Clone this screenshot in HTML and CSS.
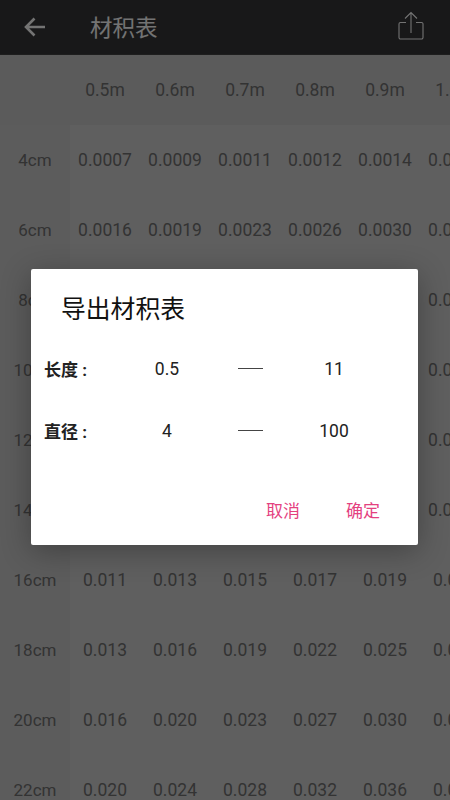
FILE: index.html
```html
<!DOCTYPE html>
<html lang="zh">
<head>
<meta charset="utf-8">
<title>材积表</title>
<link rel="stylesheet" href="styles.css">
</head>
<body>
<div class="app">
  <header class="topbar">
    <svg class="back" viewBox="0 0 22 20" width="22" height="20"><path d="M21 10H2M10.500 1.500L2 10l8.500 8.500" fill="none" stroke="#fff" stroke-width="2.600"/></svg>
    <h1 class="title">材积表</h1>
    <svg class="share" viewBox="0 0 26 30" width="26" height="30"><path d="M8 11.500H2.500a1.500 1.500 0 0 0-1.500 1.500v13.500a1.500 1.500 0 0 0 1.500 1.500h21a1.500 1.500 0 0 0 1.500-1.500V13a1.500 1.500 0 0 0-1.500-1.500H18M13 22V1.500M7 7.500L13 1.500 19 7.500" fill="none" stroke="#fff" stroke-width="1.100"/></svg>
  </header>
  <main class="table">
    <div class="row head"><span class="cell first"></span><span class="cell">0.5m</span><span class="cell">0.6m</span><span class="cell">0.7m</span><span class="cell">0.8m</span><span class="cell">0.9m</span><span class="cell">1.0m</span></div>
    <div class="row"><span class="cell first">4cm</span><span class="cell">0.0007</span><span class="cell">0.0009</span><span class="cell">0.0011</span><span class="cell">0.0012</span><span class="cell">0.0014</span><span class="cell">0.0016</span></div>
    <div class="row"><span class="cell first">6cm</span><span class="cell">0.0016</span><span class="cell">0.0019</span><span class="cell">0.0023</span><span class="cell">0.0026</span><span class="cell">0.0030</span><span class="cell">0.0033</span></div>
    <div class="row"><span class="cell first">8cm</span><span class="cell">0.0028</span><span class="cell">0.0034</span><span class="cell">0.0040</span><span class="cell">0.0046</span><span class="cell">0.0052</span><span class="cell">0.0058</span></div>
    <div class="row"><span class="cell first">10cm</span><span class="cell">0.0044</span><span class="cell">0.0053</span><span class="cell">0.0062</span><span class="cell">0.0071</span><span class="cell">0.0080</span><span class="cell">0.0089</span></div>
    <div class="row"><span class="cell first">12cm</span><span class="cell">0.0063</span><span class="cell">0.0076</span><span class="cell">0.0089</span><span class="cell">0.0102</span><span class="cell">0.0115</span><span class="cell">0.0128</span></div>
    <div class="row"><span class="cell first">14cm</span><span class="cell">0.0085</span><span class="cell">0.0103</span><span class="cell">0.0120</span><span class="cell">0.0138</span><span class="cell">0.0155</span><span class="cell">0.0173</span></div>
    <div class="row"><span class="cell first">16cm</span><span class="cell">0.011</span><span class="cell">0.013</span><span class="cell">0.015</span><span class="cell">0.017</span><span class="cell">0.019</span><span class="cell">0.022</span></div>
    <div class="row"><span class="cell first">18cm</span><span class="cell">0.013</span><span class="cell">0.016</span><span class="cell">0.019</span><span class="cell">0.022</span><span class="cell">0.025</span><span class="cell">0.028</span></div>
    <div class="row"><span class="cell first">20cm</span><span class="cell">0.016</span><span class="cell">0.020</span><span class="cell">0.023</span><span class="cell">0.027</span><span class="cell">0.030</span><span class="cell">0.034</span></div>
    <div class="row"><span class="cell first">22cm</span><span class="cell">0.020</span><span class="cell">0.024</span><span class="cell">0.028</span><span class="cell">0.032</span><span class="cell">0.036</span><span class="cell">0.040</span></div>
  </main>
  <div class="overlay">
    <section class="dialog">
      <h2 class="dialog-title">导出材积表</h2>
      <div class="range range-first">
        <span class="label">长度 :</span><span class="value">0.5</span><span class="dash"></span><span class="value">11</span>
      </div>
      <div class="range range-second">
        <span class="label">直径 :</span><span class="value">4</span><span class="dash"></span><span class="value">100</span>
      </div>
      <div class="actions">
        <button class="action">取消</button>
        <button class="action">确定</button>
      </div>
    </section>
  </div>
</div>
</body>
</html>
```

FILE: styles.css
```css
* { box-sizing: border-box; }
html, body { margin: 0; padding: 0; }
body {
  font-family: Roboto, "Noto Sans CJK SC", sans-serif;
  background: #d3d3d3;
}
.app {
  position: relative;
  width: 450px;
  height: 800px;
  overflow: hidden;
}
.topbar {
  height: 55px;
  background: #353538;
  border-bottom: 1px solid #444;
  display: flex;
  align-items: center;
  padding-left: 24px;
}
.back { flex: none; }
.title {
  margin: -3px 0 0 44px;
  font-size: 22.500px;
  font-weight: 400;
  color: #fff;
}
.share { flex: none; margin-left: auto; margin-right: 26px; margin-top: -2px; }
.table { width: 520px; }
.row {
  display: flex;
  height: 70px;
  background: #d3d3d3;
}
.row.head {
  height: 70px;
  background: #c9c9c9;
}
.cell {
  flex: none;
  width: 70px;
  display: flex;
  align-items: center;
  justify-content: center;
  font-size: 17.500px;
  color: #717171;
}
.cell.first { background: #cccccc; font-size: 17px; }
.row.head .cell.first { background: none; }
.overlay {
  position: absolute;
  inset: 0;
  background: rgba(0, 0, 0, 0.55);
  padding: 269px 32px 0 31px;
}
.dialog {
  height: 276px;
  background: #fff;
  border-radius: 2px;
  box-shadow: 0 6px 30px rgba(0, 0, 0, 0.3);
  display: flex;
  flex-direction: column;
  color: #222;
}
.dialog-title {
  margin: 25px 0 0 30px;
  font-size: 24.800px;
  line-height: 32px;
  font-weight: 400;
  color: #111;
}
.range {
  display: grid;
  grid-template-columns: 79px 88px 78px 90px;
  align-items: center;
  padding-left: 13px;
  height: 24px;
}
.range-first { margin-top: 30px; }
.range-second { margin-top: 38px; }
.label { font-size: 17px; font-weight: 700; color: #222; white-space: nowrap; }
.value { font-size: 17.500px; text-align: center; color: #222; }
.dash {
  justify-self: center;
  width: 25px;
  height: 1px;
  margin-top: -1px;
  background: #444;
}
.actions {
  margin-top: auto;
  margin-bottom: 22px;
  display: flex;
  justify-content: flex-end;
  gap: 46px;
  padding-right: 38px;
}
.action {
  border: 0;
  padding: 0;
  background: none;
  font: inherit;
  font-size: 17px;
  line-height: 24px;
  color: #e4417f;
}
```
